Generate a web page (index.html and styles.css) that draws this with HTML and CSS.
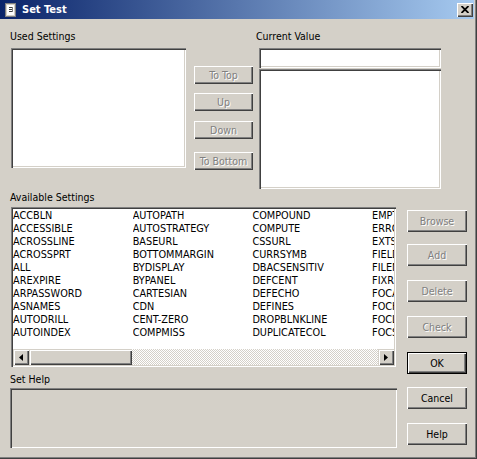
FILE: index.html
```html
<!DOCTYPE html>
<html>
<head>
<meta charset="utf-8">
<title>Set Test</title>
<link rel="stylesheet" href="styles.css">
</head>
<body>
<div class="window">
  <div class="titlebar">
    <svg class="ticon" width="11" height="14" viewBox="0 0 11 14">
      <rect x="0.5" y="0.5" width="10" height="13" fill="#d4d0c8" stroke="#808080"/>
      <rect x="2" y="2" width="7" height="10" fill="#ffffff"/>
      <rect x="4" y="4" width="3" height="1" fill="#404040"/>
      <rect x="4" y="6" width="3" height="1" fill="#404040"/>
      <rect x="4" y="8" width="3" height="1" fill="#404040"/>
      <rect x="7" y="4" width="1" height="5" fill="#808080"/>
    </svg>
    <span class="title">Set Test</span>
    <div class="close">
      <svg width="8" height="7" viewBox="0 0 8 7"><path d="M0.5,0 L7.5,7 M7.5,0 L0.5,7" stroke="#000" stroke-width="1.8" fill="none"/></svg>
    </div>
  </div>

  <div class="top">
    <div class="col-used">
      <div class="label">Used Settings</div>
      <div class="sunken used-list"></div>
    </div>
    <div class="col-move">
      <div class="btn small dis m-top">To Top</div>
      <div class="btn small dis m-up">Up</div>
      <div class="btn small dis m-down">Down</div>
      <div class="btn small dis m-bottom">To Bottom</div>
    </div>
    <div class="col-value">
      <div class="label">Current Value</div>
      <div class="sunken value-input"></div>
      <div class="sunken value-area"></div>
    </div>
  </div>

  <div class="bottom">
    <div class="col-avail">
      <div class="label">Available Settings</div>
      <div class="sunken avail-list">
        <div class="items">
          <div>ACCBLN</div><div>ACCESSIBLE</div><div>ACROSSLINE</div><div>ACROSSPRT</div><div>ALL</div>
          <div>AREXPIRE</div><div>ARPASSWORD</div><div>ASNAMES</div><div>AUTODRILL</div><div>AUTOINDEX</div>
          <div>AUTOPATH</div><div>AUTOSTRATEGY</div><div>BASEURL</div><div>BOTTOMMARGIN</div><div>BYDISPLAY</div>
          <div>BYPANEL</div><div>CARTESIAN</div><div>CDN</div><div>CENT-ZERO</div><div>COMPMISS</div>
          <div>COMPOUND</div><div>COMPUTE</div><div>CSSURL</div><div>CURRSYMB</div><div>DBACSENSITIV</div>
          <div>DEFCENT</div><div>DEFECHO</div><div>DEFINES</div><div>DROPBLNKLINE</div><div>DUPLICATECOL</div>
          <div>EMPTYREPORT</div><div>ERROROUT</div><div>EXTSORT</div><div>FIELDNAME</div><div>FILENAME</div>
          <div>FIXRETRIEVE</div><div>FOCALLOC</div><div>FOCHTMLURL</div><div>FOCLIB</div><div>FOCSTACK</div>
        </div>
        <div class="hscroll">
          <div class="sbtn"><svg width="4" height="7" viewBox="0 0 4 7"><polygon points="4,0 4,7 0,3.5" fill="#000"/></svg></div>
          <div class="thumb"></div>
          <div class="track"></div>
          <div class="sbtn"><svg width="4" height="7" viewBox="0 0 4 7"><polygon points="0,0 0,7 4,3.5" fill="#000"/></svg></div>
        </div>
      </div>
      <div class="label help-label">Set Help</div>
      <div class="sunken help-box"></div>
    </div>
    <div class="col-actions">
      <div class="btn big dis a-browse">Browse</div>
      <div class="btn big dis a-add">Add</div>
      <div class="btn big dis a-delete">Delete</div>
      <div class="btn big dis a-check">Check</div>
      <div class="btn big default a-ok">OK</div>
      <div class="btn big a-cancel">Cancel</div>
      <div class="btn big a-help">Help</div>
    </div>
  </div>
</div>
</body>
</html>
```

FILE: styles.css
```css
html, body {
  margin: 0;
  padding: 0;
}
body {
  background: #d4d0c8;
  font-family: "DejaVu Sans Condensed", "DejaVu Sans", sans-serif;
  font-stretch: condensed;
  font-size: 10.5px;
  color: #000;
}
.window {
  width: 477px;
  height: 459px;
  box-sizing: border-box;
  overflow: hidden;
  background: #d4d0c8;
  box-shadow: inset -1px -1px #404040, inset -2px -2px #808080;
}

/* title bar */
.titlebar {
  height: 19px;
  margin-right: 3px;
  background: linear-gradient(to right, #0a246a, #a6caf0);
  display: flex;
  align-items: center;
}
.ticon {
  margin-left: 5px;
  flex: none;
}
.title {
  margin-left: 6px;
  color: #fff;
  font-weight: bold;
  font-size: 11px;
  line-height: 13px;
}
.close {
  margin-left: auto;
  margin-right: 1px;
  width: 16px;
  height: 14px;
  box-sizing: border-box;
  background: #d4d0c8;
  box-shadow: inset 1px 1px #fff, inset -1px -1px #404040, inset -2px -2px #808080;
  display: flex;
  align-items: center;
  justify-content: center;
}

.label {
  line-height: 13px;
  height: 13px;
  white-space: nowrap;
}

.sunken {
  box-sizing: border-box;
  background: #fff;
  box-shadow: inset 1px 1px #808080, inset 2px 2px #404040, inset -1px -1px #fff, inset -2px -2px #d4d0c8;
}

/* top section */
.top {
  display: flex;
  align-items: flex-start;
  padding: 11px 0 0 10px;
}
.col-used .used-list {
  margin: 5px 0 0 1px;
  width: 175px;
  height: 120px;
}
.col-move {
  margin-left: 8px;
  width: 59px;
  padding-top: 36px;
  display: flex;
  flex-direction: column;
}
.col-value {
  margin-left: 3px;
}
.value-input {
  margin: 5px 0 1px 3px;
  width: 182px;
  height: 20px;
}
.value-area {
  margin-left: 3px;
  width: 182px;
  height: 120px;
}

/* buttons */
.btn {
  box-sizing: border-box;
  background: #d4d0c8;
  box-shadow: inset 1px 1px #fff, inset -1px -1px #404040, inset -2px -2px #808080;
  display: flex;
  align-items: center;
  justify-content: center;
  white-space: nowrap;
}
.btn.small {
  height: 18px;
  padding-bottom: 1px;
}
.btn.big {
  width: 60px;
  height: 22px;
  padding-bottom: 1px;
}
.btn.dis {
  color: #808080;
  text-shadow: 1px 1px 0 #fff;
}
.btn.default {
  box-shadow: inset 0 0 0 1px #000, inset 2px 2px #fff, inset -2px -2px #404040, inset -3px -3px #808080;
}
.m-up { margin-top: 9px; }
.m-down { margin-top: 10px; }
.m-bottom { margin-top: 13px; }

/* bottom section */
.bottom {
  display: flex;
  align-items: flex-start;
  padding-left: 10px;
  margin-top: 2px;
}
.col-avail {
  width: 387px;
  display: flex;
  flex-direction: column;
}
.avail-list {
  margin: 3px 0 0 1px;
  width: 385px;
  height: 160px;
  padding: 2px;
  display: flex;
  flex-direction: column;
}
.items {
  flex: 1;
  min-height: 0;
  overflow: hidden;
  display: grid;
  grid-template-rows: repeat(10, 13px);
  grid-template-columns: 119.7px 119.7px 119.7px minmax(0, 1fr);
  grid-auto-flow: column;
  font-size: 10.8px;
  line-height: 13px;
  white-space: nowrap;
}
.items > div {
  overflow: hidden;
  min-width: 0;
}
.hscroll {
  height: 16px;
  flex: none;
  display: flex;
}
.sbtn {
  width: 16px;
  height: 16px;
  box-sizing: border-box;
  background: #d4d0c8;
  box-shadow: inset 1px 1px #d4d0c8, inset 2px 2px #fff, inset -1px -1px #404040, inset -2px -2px #808080;
  display: flex;
  align-items: center;
  justify-content: center;
}
.thumb {
  width: 103px;
  height: 16px;
  box-sizing: border-box;
  background: #d4d0c8;
  box-shadow: inset 1px 1px #d4d0c8, inset 2px 2px #fff, inset -1px -1px #404040, inset -2px -2px #808080;
}
.track {
  flex: 1;
  background-color: #fff;
  background-image: conic-gradient(#d4d0c8 25%, #fff 0 50%, #d4d0c8 0 75%, #fff 0);
  background-size: 2px 2px;
}
.help-label {
  margin-top: 6px;
}
.help-box {
  margin-top: 2px;
  width: 387px;
  height: 60px;
  background: #d4d0c8;
}

.col-actions {
  margin-left: 10px;
  width: 60px;
  padding-top: 19px;
  display: flex;
  flex-direction: column;
}
.a-add { margin-top: 12px; }
.a-delete { margin-top: 14px; }
.a-check { margin-top: 14px; }
.a-ok { margin-top: 14px; }
.a-cancel { margin-top: 13px; }
.a-help { margin-top: 14px; }
```
